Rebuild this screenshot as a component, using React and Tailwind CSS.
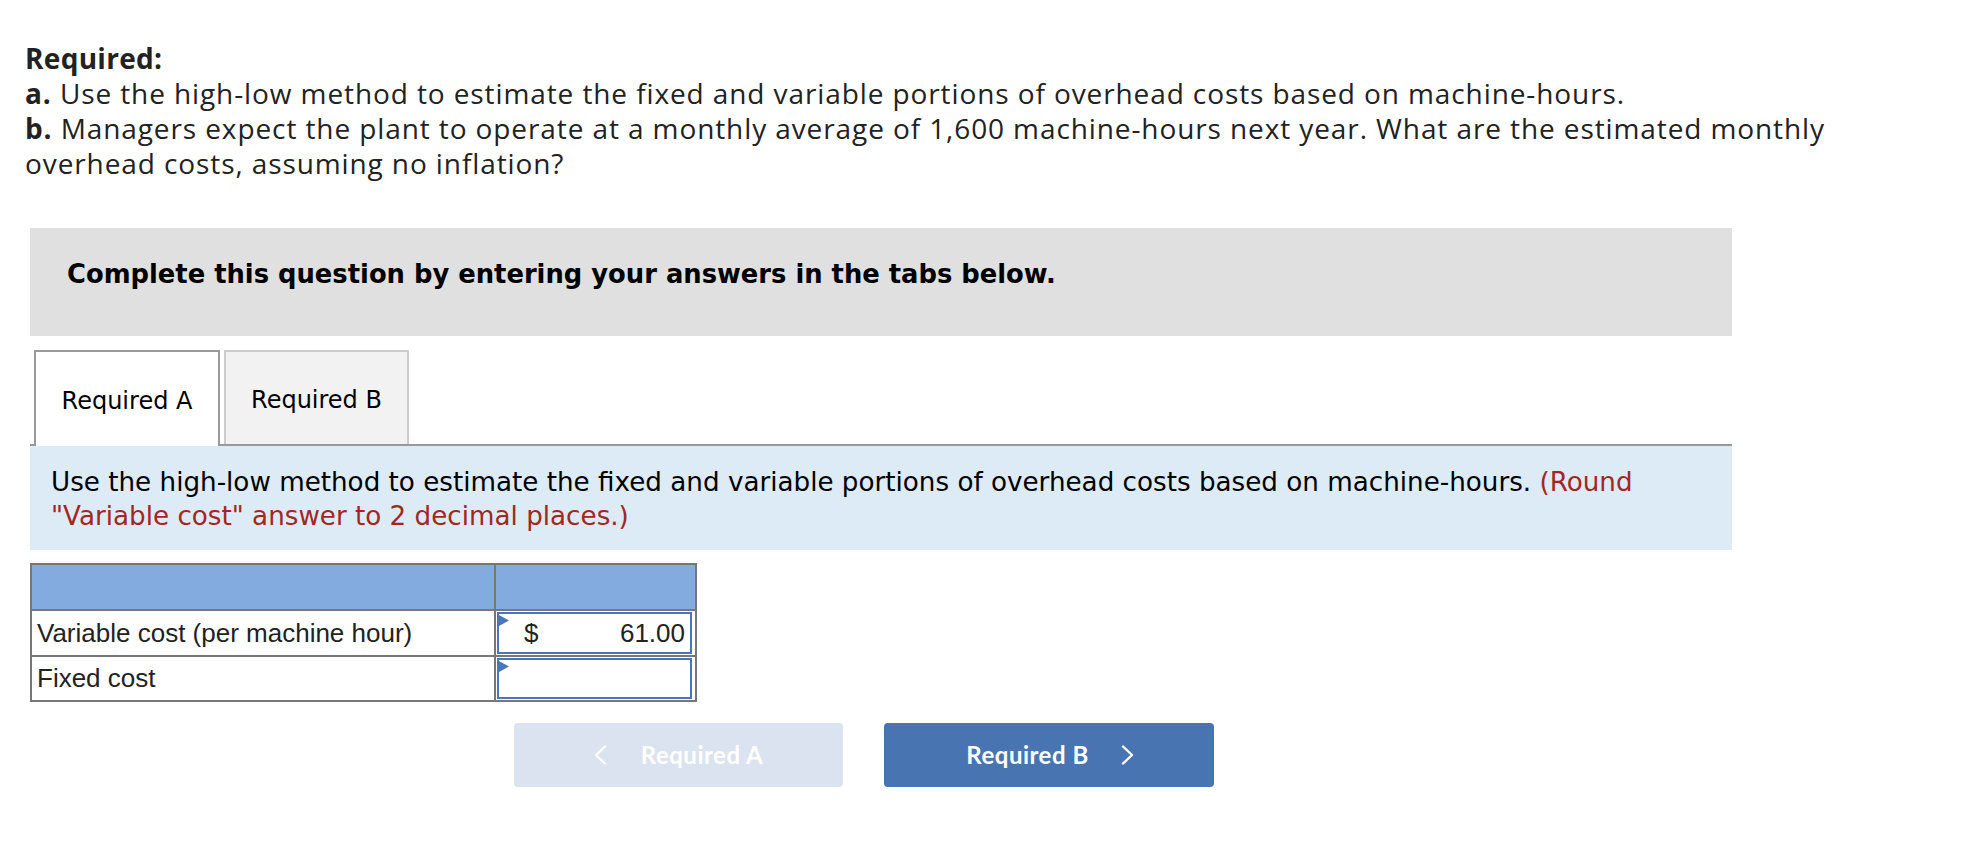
const Chevron = ({ dir }) => (
  <svg width="13" height="20" viewBox="0 0 13 20" fill="none" stroke="currentColor" strokeWidth="2.4" strokeLinecap="round" strokeLinejoin="round">
    {dir === 'left' ? <polyline points="11,1.5 2,10 11,18.5" /> : <polyline points="2,1.5 11,10 2,18.5" />}
  </svg>
);

const Marker = () => (
  <svg className="absolute left-0 top-[1px]" width="10" height="11" viewBox="0 0 10 11">
    <polygon points="0,0 10,5.5 0,11" fill="#4a76b8" />
  </svg>
);

const InputCell = ({ children }) => (
  <div className="w-[197px] p-[1px] bg-white">
    <div className="relative h-full border-2 border-[#4a76b8] flex items-center pl-[25px] pr-[5px]">
      <Marker />
      {children}
    </div>
  </div>
);

const App = () => {
  return (
    <div className="min-h-screen bg-white pl-[25px] pt-[41px]">
      <div className="font-['Open_Sans',sans-serif] text-[28px] leading-[35px] tracking-[0.9px] text-[#222]">
        <div className="font-bold tracking-[0.3px]">Required:</div>
        <div>
          <span className="font-bold">a.</span> Use the high-low method to estimate the fixed and variable portions of overhead costs based on machine-hours.
        </div>
        <div>
          <span className="font-bold">b.</span> Managers expect the plant to operate at a monthly average of 1,600 machine-hours next year. What are the estimated monthly
          <br />
          overhead costs, assuming no inflation?
        </div>
      </div>

      <div className="ml-[5px] mt-[47px] w-[1702px] font-['DejaVu_Sans',Verdana,sans-serif]">
        <div className="h-[108px] bg-[#e0e0e0] pt-[31px] pl-[37px] text-[25.8px] leading-[30px] font-bold text-black">
          Complete this question by entering your answers in the tabs below.
        </div>

        <div className="mt-[14px] flex gap-[4px] pl-[4px] border-b-2 border-[#999]">
          <div className="relative z-10 -mb-[2px] h-[96px] w-[186px] border-2 border-b-0 border-[#999] bg-white flex items-center justify-center pt-[4px] text-[24px] leading-[28px] text-black">
            Required A
          </div>
          <div className="h-[94px] w-[185px] border-2 border-b-0 border-[#ccc] bg-[#f2f2f2] flex items-center justify-center pt-[4px] text-[24px] leading-[28px] text-black">
            Required B
          </div>
        </div>

        <div className="h-[104px] bg-[#ddebf7] pt-[19px] pl-[21px] text-[26.2px] leading-[34px] text-black">
          Use the high-low method to estimate the fixed and variable portions of overhead costs based on machine-hours.{' '}
          <span className="text-[#a3271f]">
            (Round
            <br />
            "Variable cost" answer to 2 decimal places.)
          </span>
        </div>

        <div className="mt-[13px] w-[667px] border-2 border-[#777] font-['Liberation_Sans',Arial,sans-serif] text-[26px] text-[#222]">
          <div className="flex h-[44px] bg-[#84abdf]">
            <div className="w-[464px] border-r-2 border-[#777]" />
            <div className="w-[197px]" />
          </div>
          <div className="flex h-[46px] border-t-2 border-[#777]">
            <div className="w-[464px] border-r-2 border-[#777] pl-[5px] flex items-center">Variable cost (per machine hour)</div>
            <InputCell>
              <span>$</span>
              <span className="ml-auto">61.00</span>
            </InputCell>
          </div>
          <div className="flex h-[45px] border-t-2 border-[#777]">
            <div className="w-[464px] border-r-2 border-[#777] pl-[5px] flex items-center">Fixed cost</div>
            <InputCell />
          </div>
        </div>

        <div className="mt-[21px] ml-[484px] flex gap-[41px] font-['Lato',sans-serif] text-[24px] tracking-[0.5px] font-bold text-white">
          <button className="h-[64px] w-[329px] rounded-[4px] bg-[#dae3ef] flex items-center justify-center gap-[34px]">
            <Chevron dir="left" />
            <span>Required A</span>
          </button>
          <button className="h-[64px] w-[330px] rounded-[4px] bg-[#4874b2] flex items-center justify-center gap-[32px] pl-[2px]">
            <span>Required B</span>
            <Chevron dir="right" />
          </button>
        </div>
      </div>
    </div>
  );
};

export default App;
